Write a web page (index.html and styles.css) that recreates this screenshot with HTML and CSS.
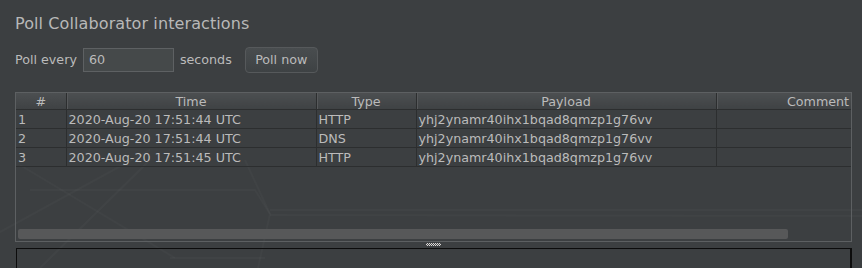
FILE: index.html
```html
<!DOCTYPE html>
<html lang="en">
<head>
    <meta charset="UTF-8">
    <title>Poll Collaborator interactions</title>
    <link rel="stylesheet" href="styles.css">
</head>
<body>
    <svg class="watermark" width="862" height="268" viewBox="0 0 862 268">
        <g fill="none" stroke="#ffffff" stroke-opacity="0.025" stroke-width="2">
            <path d="M0 232 L150 150"/>
            <path d="M20 165 L175 258"/>
            <path d="M40 268 L150 160"/>
            <path d="M30 190 L255 190 L270 214 L258 268"/>
            <path d="M170 258 L265 258"/>
            <path d="M245 160 L270 214"/>
            <path d="M270 210 L862 210"/>
            <path d="M270 215 L862 216"/>
        </g>
    </svg>

    <div class="panel">
        <div class="title">Poll Collaborator interactions</div>

        <div class="controls">
            <span>Poll every</span>
            <input class="poll-input" type="text" value="60">
            <span>seconds</span>
            <button class="poll-button">Poll now</button>
        </div>

        <div class="table-wrap">
            <table class="results">
                <colgroup>
                    <col class="c-num">
                    <col class="c-time">
                    <col class="c-type">
                    <col class="c-payload">
                    <col class="c-comment">
                </colgroup>
                <thead>
                    <tr>
                        <th>#</th>
                        <th>Time</th>
                        <th>Type</th>
                        <th>Payload</th>
                        <th>Comment</th>
                    </tr>
                </thead>
                <tbody>
                    <tr>
                        <td>1</td>
                        <td>2020-Aug-20 17:51:44 UTC</td>
                        <td>HTTP</td>
                        <td>yhj2ynamr40ihx1bqad8qmzp1g76vv</td>
                        <td></td>
                    </tr>
                    <tr>
                        <td>2</td>
                        <td>2020-Aug-20 17:51:44 UTC</td>
                        <td>DNS</td>
                        <td>yhj2ynamr40ihx1bqad8qmzp1g76vv</td>
                        <td></td>
                    </tr>
                    <tr>
                        <td>3</td>
                        <td>2020-Aug-20 17:51:45 UTC</td>
                        <td>HTTP</td>
                        <td>yhj2ynamr40ihx1bqad8qmzp1g76vv</td>
                        <td></td>
                    </tr>
                </tbody>
            </table>
            <div class="filler"></div>
            <div class="hscroll"><div class="thumb"></div></div>
        </div>

        <div class="splitter"><div class="grip"></div></div>

        <div class="details"></div>
    </div>
</body>
</html>
```

FILE: styles.css
```css
body {
    margin: 0;
    background-color: #3c3f41;
    color: #bbbbbb;
    font-family: "DejaVu Sans", sans-serif;
    font-size: 12.7px;
    overflow: hidden;
}
.watermark {
    position: absolute;
    top: 0;
    left: 0;
    z-index: -1;
    pointer-events: none;
}
.panel {
    padding-left: 15px;
}
.title {
    font-size: 16px;
    line-height: 19px;
    padding-top: 14px;
    color: #b8b8b8;
    letter-spacing: 0.1px;
}
.controls {
    display: flex;
    align-items: center;
    gap: 6px;
    height: 25px;
    margin-top: 14px;
}
.poll-input {
    box-sizing: border-box;
    width: 91px;
    height: 24px;
    margin: 0;
    padding: 0 5px;
    background-color: #45494a;
    border: 1px solid #5e6163;
    border-radius: 0;
    color: #bbbbbb;
    font-family: "DejaVu Sans", sans-serif;
    font-size: 12.7px;
    outline: none;
}
.poll-button {
    box-sizing: border-box;
    width: 73px;
    height: 26px;
    margin-left: 7px;
    padding: 0;
    background: linear-gradient(#494d4f, #3e4244);
    border: 1px solid #56595b;
    border-radius: 4px;
    color: #bbbbbb;
    font-family: "DejaVu Sans", sans-serif;
    font-size: 12.7px;
}
.table-wrap {
    box-sizing: border-box;
    display: flex;
    flex-direction: column;
    width: 837px;
    height: 150px;
    margin-top: 20px;
    border: 1px solid #5d6062;
    overflow: hidden;
}
.results {
    table-layout: fixed;
    border-collapse: collapse;
    width: 904px;
    flex: none;
}
.c-num { width: 50px; }
.c-time { width: 250px; }
.c-type { width: 100px; }
.c-payload { width: 300px; }
.c-comment { width: 204px; }
.results th {
    height: 16px;
    padding: 0;
    background: linear-gradient(#4c4f51, #3f4244);
    border-bottom: 1px solid #2c2e2f;
    border-right: 1px solid #2c2e2f;
    box-shadow: inset 1px 0 #57595b;
    font-weight: normal;
    text-align: center;
    white-space: nowrap;
}
.results th:first-child {
    box-shadow: none;
}
.results td {
    height: 17px;
    padding: 1px 0 0 2px;
    line-height: 16px;
    border-bottom: 1px solid #2c2e2f;
    border-right: 1px solid #2c2e2f;
    white-space: nowrap;
    overflow: hidden;
}
.filler {
    flex: 1;
}
.hscroll {
    height: 10px;
    padding: 0 0 2px 2px;
}
.thumb {
    width: 770px;
    height: 10px;
    background-color: #575859;
    border-radius: 2px;
}
.splitter {
    height: 5px;
    width: 837px;
    display: flex;
    justify-content: center;
    padding-top: 1px;
}
.grip {
    width: 15px;
    height: 3px;
    background: repeating-conic-gradient(#d8d8d8 0 25%, #4a4a4a 0 50%);
    background-size: 2px 2px;
}
.details {
    box-sizing: border-box;
    width: 836px;
    height: 60px;
    margin-left: 1px;
    border: 1px solid #0c0c0c;
    border-right-width: 2px;
}
```
